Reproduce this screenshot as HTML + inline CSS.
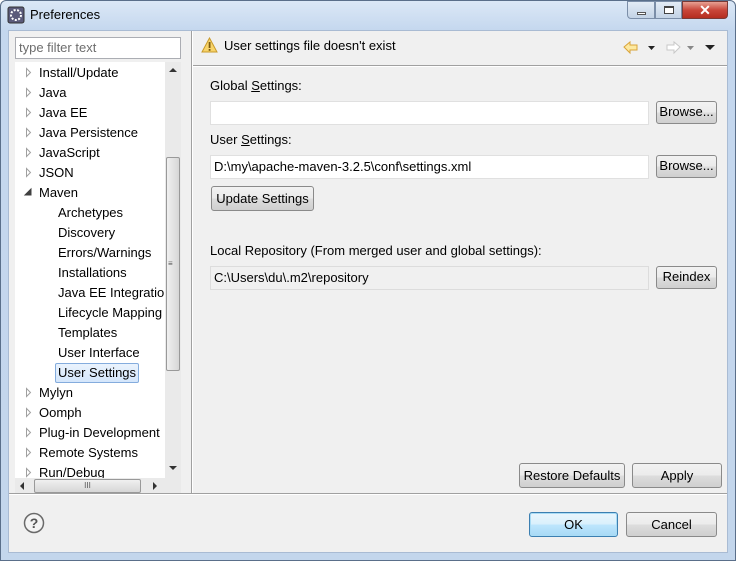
<!DOCTYPE html>
<html><head><style>
*{margin:0;padding:0;box-sizing:border-box}
body{width:736px;height:561px;overflow:hidden;background:#fff;font-family:"Liberation Sans","Noto Sans CJK SC",sans-serif;font-size:13px;color:#000;position:relative}
.a{position:absolute;white-space:nowrap}
.frame{position:absolute;left:0;top:0;width:736px;height:561px;background:linear-gradient(#dbe8f6,#c4d7ee 30px,#c3d6ec);border:1px solid #5a6f8a;border-radius:6px 6px 0 0}
.client{position:absolute;left:8px;top:30px;width:720px;height:523px;background:#f0f0f0;border:1px solid #a9bbd3}
.btn{position:absolute;border:1px solid #8a8a8a;border-radius:3px;background:linear-gradient(#f2f2f2,#ebebeb 50%,#dddddd 51%,#cfcfcf);text-align:center;line-height:20px;font-size:13px}
.inp{position:absolute;background:#fff;border:1px solid #abadb3;padding-left:3px;line-height:20px}
.tri{position:absolute;width:6px;height:9px}
</style></head><body>
<div class="frame"></div>
<svg class="a" style="left:7px;top:6px" width="18" height="18"><rect x="1" y="1" width="16" height="16" rx="2" fill="#5a5a7a" stroke="#333"/><circle cx="9" cy="9" r="5" fill="none" stroke="#fff" stroke-width="2" stroke-dasharray="2 1.5"/></svg>
<div class="a" style="left:30px;top:7px;font-size:13px">Preferences</div>
<div class="a" style="left:627px;top:1px;width:28px;height:18px;border:1px solid #7b8ea8;border-radius:0 0 0 4px;background:linear-gradient(#e3ecf6,#c3d3e6)"><div class="a" style="left:9px;top:10px;width:9px;height:3px;border:1px solid #555;background:#fff"></div></div>
<div class="a" style="left:655px;top:1px;width:27px;height:18px;border:1px solid #7b8ea8;background:linear-gradient(#e3ecf6,#c3d3e6)"><div class="a" style="left:8px;top:4px;width:10px;height:8px;border:1px solid #444;border-top-width:2px;background:#fff"></div></div>
<div class="a" style="left:682px;top:1px;width:46px;height:18px;border:1px solid #7a3a36;border-radius:0 0 4px 0;background:linear-gradient(#e8a193,#c9473a 50%,#b52d1f);color:#fff;font-weight:bold;text-align:center;line-height:16px;font-size:14px">✕</div>
<div class="client"></div>
<div class="inp" style="left:15px;top:37px;width:166px;height:22px;color:#6d6d6d">type filter text</div>
<div class="a" style="left:15px;top:62px;width:166px;height:431px;background:#fff"></div>
<div class="a" style="left:165px;top:62px;width:16px;height:416px;background:#eaeaea"></div>
<div class="a" style="left:166px;top:157px;width:14px;height:214px;border:1px solid #999;border-radius:2px;background:linear-gradient(90deg,#f0f0f0,#d6d6d6)"></div>
<div class="a" style="left:168px;top:259px;font-size:8px;color:#555">≡</div>
<div class="a" style="left:169px;top:68px;border-left:4px solid transparent;border-right:4px solid transparent;border-bottom:4px solid #333"></div>
<div class="a" style="left:169px;top:466px;border-left:4px solid transparent;border-right:4px solid transparent;border-top:4px solid #333"></div>
<div class="a" style="left:15px;top:478px;width:166px;height:15px;background:#eaeaea"></div>
<div class="a" style="left:34px;top:479px;width:107px;height:14px;border:1px solid #999;border-radius:2px;background:linear-gradient(#f0f0f0,#d6d6d6);font-size:8px;text-align:center;line-height:12px;color:#555">III</div>
<div class="a" style="left:20px;top:482px;border-top:4px solid transparent;border-bottom:4px solid transparent;border-right:4px solid #333"></div>
<div class="a" style="left:153px;top:482px;border-top:4px solid transparent;border-bottom:4px solid transparent;border-left:4px solid #333"></div>
<svg class="a" style="left:0;top:0" width="40" height="480" fill="#fff" stroke="#a0a0a0">
<path d="M26.5 68.5 L30.5 72.5 L26.5 76.5 Z"/><path d="M26.5 88.5 L30.5 92.5 L26.5 96.5 Z"/><path d="M26.5 108.5 L30.5 112.5 L26.5 116.5 Z"/><path d="M26.5 128.5 L30.5 132.5 L26.5 136.5 Z"/><path d="M26.5 148.5 L30.5 152.5 L26.5 156.5 Z"/><path d="M26.5 168.5 L30.5 172.5 L26.5 176.5 Z"/>
<path d="M31 189 L31 195 L25 195 Z" fill="#404040" stroke="#404040"/>
<path d="M26.5 388.5 L30.5 392.5 L26.5 396.5 Z"/><path d="M26.5 408.5 L30.5 412.5 L26.5 416.5 Z"/><path d="M26.5 428.5 L30.5 432.5 L26.5 436.5 Z"/><path d="M26.5 448.5 L30.5 452.5 L26.5 456.5 Z"/><path d="M26.5 468.5 L30.5 472.5 L26.5 476.5 Z"/>
</svg>
<div class="a" style="left:39px;top:65px">Install/Update</div>
<div class="a" style="left:39px;top:85px">Java</div>
<div class="a" style="left:39px;top:105px">Java EE</div>
<div class="a" style="left:39px;top:125px">Java Persistence</div>
<div class="a" style="left:39px;top:145px">JavaScript</div>
<div class="a" style="left:39px;top:165px">JSON</div>
<div class="a" style="left:39px;top:185px">Maven</div>
<div class="a" style="left:58px;top:205px">Archetypes</div>
<div class="a" style="left:58px;top:225px">Discovery</div>
<div class="a" style="left:58px;top:245px">Errors/Warnings</div>
<div class="a" style="left:58px;top:265px">Installations</div>
<div class="a" style="left:58px;top:285px;width:107px;overflow:hidden">Java EE Integration</div>
<div class="a" style="left:58px;top:305px;width:107px;overflow:hidden">Lifecycle Mapping</div>
<div class="a" style="left:58px;top:325px">Templates</div>
<div class="a" style="left:58px;top:345px">User Interface</div>
<div class="a" style="left:55px;top:363px;width:84px;height:20px;border:1px solid #84acdd;border-radius:2px;background:linear-gradient(#eaf3fd,#d4e6fb)"></div>
<div class="a" style="left:58px;top:365px">User Settings</div>
<div class="a" style="left:39px;top:385px">Mylyn</div>
<div class="a" style="left:39px;top:405px">Oomph</div>
<div class="a" style="left:39px;top:425px">Plug-in Development</div>
<div class="a" style="left:39px;top:445px">Remote Systems</div>
<div class="a" style="left:39px;top:465px;width:126px;height:13px;overflow:hidden">Run/Debug</div>
<div class="a" style="left:191px;top:31px;width:2px;height:462px;border-left:1px solid #a0a0a0;border-right:1px solid #fff"></div>
<div class="a" style="left:9px;top:493px;width:718px;height:2px;border-top:1px solid #a0a0a0;border-bottom:1px solid #fff"></div>
<svg class="a" style="left:201px;top:37px" width="17" height="16"><path d="M8.5 1 L16 15 H1 Z" fill="#f8d46a" stroke="#c89a2a"/><rect x="7.7" y="5" width="1.8" height="6" fill="#7a5a10"/><rect x="7.7" y="12" width="1.8" height="1.8" fill="#7a5a10"/></svg>
<div class="a" style="left:224px;top:38px">User settings file doesn't exist</div>
<svg class="a" style="left:622px;top:40px" width="100" height="16"><path d="M2 7 L8 2 V5 H15 V10 H8 V13 Z" fill="#fde9a0" stroke="#d9a43a"/><path d="M26 6 H33 L29.5 10 Z" fill="#222"/><path d="M58 7 L52 2 V5 H45 V10 H52 V13 Z" fill="#fff" stroke="#c8c8c8"/><path d="M65 6 H72 L68.5 10 Z" fill="#888"/><path d="M83 5 H93 L88 10 Z" fill="#222"/></svg>
<div class="a" style="left:193px;top:65px;width:534px;height:2px;border-top:1px solid #a0a0a0;border-bottom:1px solid #fff"></div>
<div class="a" style="left:210px;top:78px">Global <u>S</u>ettings:</div>
<div class="inp" style="left:210px;top:101px;width:439px;height:24px;border-color:#e0e0e0"></div>
<div class="btn" style="left:656px;top:101px;width:61px;height:23px">Browse...</div>
<div class="a" style="left:210px;top:132px">User <u>S</u>ettings:</div>
<div class="inp" style="left:210px;top:155px;width:439px;height:24px;border-color:#e0e0e0;line-height:22px">D:\my\apache-maven-3.2.5\conf\settings.xml</div>
<div class="btn" style="left:656px;top:155px;width:61px;height:23px">Browse...</div>
<div class="btn" style="left:211px;top:186px;width:103px;height:25px;line-height:23px">Update Settings</div>
<div class="a" style="left:210px;top:243px">Local Repository (From merged user and global settings):</div>
<div class="inp" style="left:210px;top:266px;width:439px;height:24px;background:#f0f0f0;border-color:#dcdcdc;line-height:22px">C:\Users\du\.m2\repository</div>
<div class="btn" style="left:656px;top:266px;width:61px;height:23px">Reindex</div>
<div class="btn" style="left:519px;top:463px;width:106px;height:25px;line-height:23px">Restore Defaults</div>
<div class="btn" style="left:632px;top:463px;width:90px;height:25px;line-height:23px">Apply</div>
<svg class="a" style="left:23px;top:512px" width="22" height="22"><circle cx="11" cy="11" r="9.5" fill="#f4f4f4" stroke="#6a6a6a" stroke-width="1.5"/><text x="11" y="16" text-anchor="middle" font-family="Liberation Sans" font-weight="bold" font-size="14" fill="#555">?</text></svg>
<div class="btn" style="left:529px;top:512px;width:89px;height:25px;line-height:23px;border-color:#3c7fb1;background:linear-gradient(#eaf6fd,#d9f0fc 50%,#bee6fd 51%,#a7d9f5);box-shadow:inset 0 0 0 1px #a9dcf5">OK</div>
<div class="btn" style="left:626px;top:512px;width:91px;height:25px;line-height:23px">Cancel</div>
</body></html>
